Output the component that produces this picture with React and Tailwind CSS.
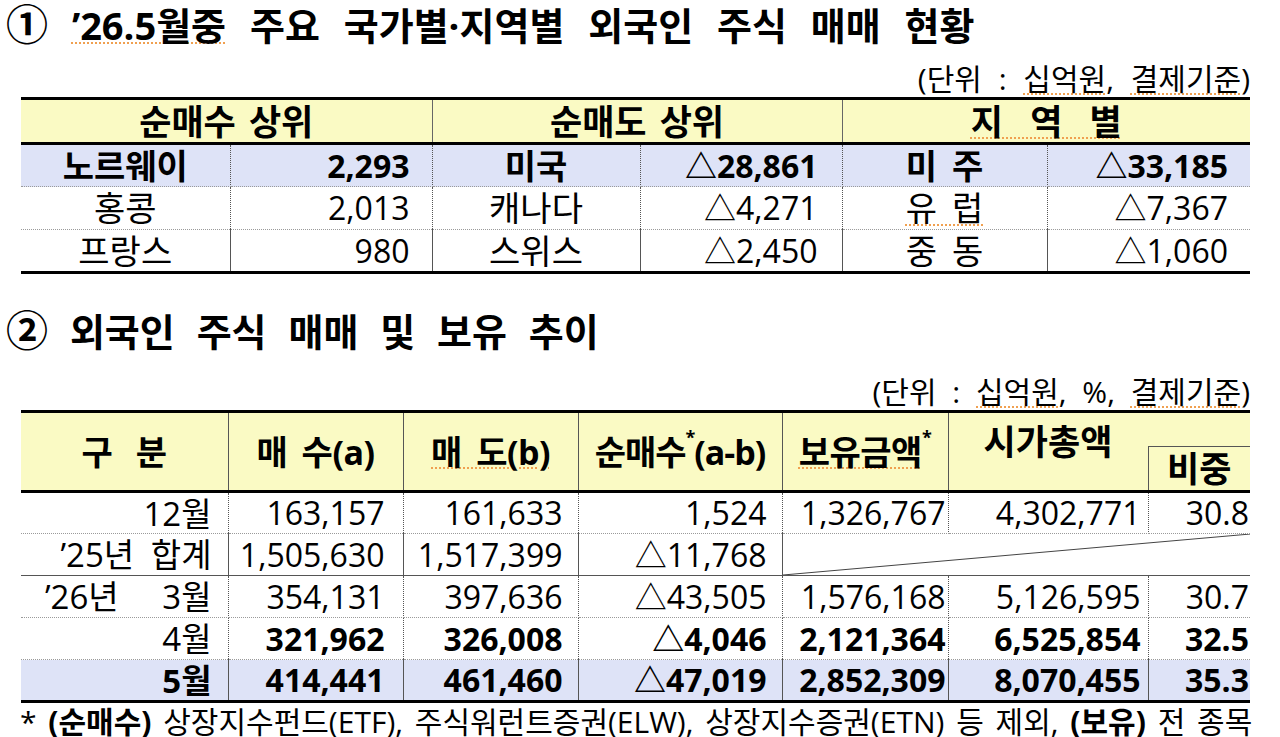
const YELLOW = 'bg-[#fafac4]';
const BLUE = 'bg-[#dee3f7]';

// spell-check style squiggle seen under some words in the source document
const Squiggle = ( { children } ) => (
	<span className="underline decoration-dotted decoration-[#f0a050] decoration-2 underline-offset-[3px]">{ children }</span>
);

const regionRows = [
	{ name: '노르웨이', buy: '2,293', sellName: '미국', sell: '△28,861', area: '미 주', areaVal: '△33,185', bold: true },
	{ name: '홍콩', buy: '2,013', sellName: '캐나다', sell: '△4,271', area: <Squiggle>유 럽</Squiggle>, areaVal: '△7,367' },
	{ name: '프랑스', buy: '980', sellName: '스위스', sell: '△2,450', area: '중 동', areaVal: '△1,060' },
];

const trendRows = [
	{ label: '12월', vals: [ '163,157', '161,633', '1,524', '1,326,767', '4,302,771', '30.8' ] },
	{ label: '’25년 합계', vals: [ '1,505,630', '1,517,399', '△11,768' ], merged: true },
	{ label: '’26년', label2: '3월', vals: [ '354,131', '397,636', '△43,505', '1,576,168', '5,126,595', '30.7' ] },
	{ label: '4월', vals: [ '321,962', '326,008', '△4,046', '2,121,364', '6,525,854', '32.5' ], boldVals: true },
	{ label: '5월', vals: [ '414,441', '461,460', '△47,019', '2,852,309', '8,070,455', '35.3' ], boldVals: true, boldLabel: true, blue: true },
];

// right padding per number column of the second table
const padRight = [ 'pr-[18px]', 'pr-[15px]', 'pr-[15px]', 'pr-[2px]', 'pr-[7px]', 'pr-[1px]' ];

const RegionTable = () => (
	<table className="ml-[21px] w-[1229px] table-fixed border-collapse">
		<colgroup>
			<col className="w-[209px]" />
			<col className="w-[202px]" />
			<col className="w-[208px]" />
			<col className="w-[202px]" />
			<col className="w-[205px]" />
			<col className="w-[203px]" />
		</colgroup>
		<thead>
			<tr className={ `h-[45px] ${ YELLOW }` }>
				<th colSpan={ 2 } className="border-t-[3px] border-b-[3px] border-t-black border-b-black border-r border-r-[#666] p-0 text-[35px] font-bold leading-none [word-spacing:4px]">순매수 상위</th>
				<th colSpan={ 2 } className="border-t-[3px] border-b-[3px] border-t-black border-b-black border-r border-r-[#666] p-0 text-[35px] font-bold leading-none [word-spacing:4px]">순매도 상위</th>
				<th colSpan={ 2 } className="border-t-[3px] border-b-[3px] border-t-black border-b-black p-0 text-[35px] font-bold leading-none [word-spacing:18px]"><Squiggle>지 역 별</Squiggle></th>
			</tr>
		</thead>
		<tbody>
			{ regionRows.map( ( row, i ) => {
				const last = i === regionRows.length - 1;
				const rowBorder = last ? 'border-b-[3px] border-b-black' : 'border-b border-dotted border-b-[#9a9a9a]';
				const weight = row.bold ? 'font-bold' : 'font-normal';
				return (
					<tr key={ i } className={ `h-[43px] ${ row.bold ? BLUE : 'bg-white' }` }>
						<td className={ `${ rowBorder } border-r border-r-[#555] p-0 text-center text-[34px] leading-none ${ weight }` }>{ row.name }</td>
						<td className={ `${ rowBorder } border-r border-r-[#555] p-0 pr-[22px] text-right text-[32px] leading-none ${ weight }` }>{ row.buy }</td>
						<td className={ `${ rowBorder } border-r border-r-[#555] p-0 text-center text-[34px] leading-none ${ weight }` }>{ row.sellName }</td>
						<td className={ `${ rowBorder } border-r border-r-[#555] p-0 pr-[24px] text-right text-[32px] leading-none ${ weight }` }>{ row.sell }</td>
						<td className={ `${ rowBorder } border-r border-r-[#555] p-0 text-center text-[34px] leading-none [word-spacing:6px] ${ weight }` }>{ row.area }</td>
						<td className={ `${ rowBorder } p-0 pr-[22px] text-right text-[32px] leading-none ${ weight }` }>{ row.areaVal }</td>
					</tr>
				);
			} ) }
		</tbody>
	</table>
);

const TrendTable = () => {
	const headTh = 'border-t-[3px] border-b-[3px] border-t-black border-b-black border-r border-r-[#555] p-0 text-[34px] font-bold leading-none';
	return (
		<table className="ml-[21px] w-[1229px] table-fixed border-collapse">
			<colgroup>
				<col className="w-[207px]" />
				<col className="w-[175px]" />
				<col className="w-[175px]" />
				<col className="w-[204px]" />
				<col className="w-[166px]" />
				<col className="w-[200px]" />
				<col className="w-[102px]" />
			</colgroup>
			<thead className={ YELLOW }>
				<tr className="h-[35px]">
					<th rowSpan={ 2 } className={ `${ headTh } [word-spacing:14px]` }>구 분</th>
					<th rowSpan={ 2 } className={ `${ headTh } [word-spacing:6px] tracking-[-0.5px]` }>매 수(a)</th>
					<th rowSpan={ 2 } className={ `${ headTh } [word-spacing:6px] tracking-[-0.5px]` }><Squiggle>매 도(b)</Squiggle></th>
					<th rowSpan={ 2 } className={ `${ headTh } tracking-[-1px]` }>순매수<sup className="text-[18px] align-[12px]">*</sup>(a-b)</th>
					<th rowSpan={ 2 } className={ `${ headTh } tracking-[-0.5px]` }><Squiggle>보유금액</Squiggle><sup className="text-[18px] align-[12px]">*</sup></th>
					<th rowSpan={ 2 } className="border-t-[3px] border-b-[3px] border-t-black border-b-black p-0 pt-[11px] align-top text-[35px] font-bold leading-[36px]">시가총액</th>
					<th className="border-t-[3px] border-t-black p-0" />
				</tr>
				<tr className="h-[45px]">
					<th className="border-l border-t border-l-[#555] border-t-[#555] border-b-[3px] border-b-black p-0 text-[35px] font-bold leading-none">비중</th>
				</tr>
			</thead>
			<tbody>
				{ trendRows.map( ( row, i ) => {
					const last = i === trendRows.length - 1;
					const rowBorder = last
						? 'border-b-[3px] border-b-black'
						: row.merged
						? 'border-b border-b-[#555]'
						: 'border-b border-dotted border-b-[#9a9a9a]';
					return (
						<tr key={ i } className={ `h-[42px] ${ row.blue ? BLUE : 'bg-white' }` }>
							<td className={ `${ rowBorder } border-r border-r-[#555] p-0 pr-[16px] text-right text-[33px] leading-none ${ row.boldLabel ? 'font-bold' : 'font-normal' }` }>
								{ row.label2 ? (
									<div className="flex justify-between pl-[24px]">
										<span>{ row.label }</span>
										<span>{ row.label2 }</span>
									</div>
								) : (
									<span className="[word-spacing:8px]">{ row.label }</span>
								) }
							</td>
							{ row.vals.map( ( v, j ) => (
								<td
									key={ j }
									className={ `${ rowBorder } ${ j < 5 ? 'border-r border-r-[#555]' : '' } p-0 ${ padRight[ j ] } text-right text-[32px] leading-none ${ row.boldVals ? 'font-bold' : 'font-normal' }` }
								>
									{ v }
								</td>
							) ) }
							{ row.merged && (
								<td colSpan={ 3 } className={ `${ rowBorder } relative p-0` }>
									<svg className="absolute inset-0 h-full w-full" viewBox="0 0 100 10" preserveAspectRatio="none">
										<line x1="0" y1="10" x2="100" y2="0" stroke="#444" strokeWidth="1" vectorEffect="non-scaling-stroke" />
									</svg>
								</td>
							) }
						</tr>
					);
				} ) }
			</tbody>
		</table>
	);
};

export default function App() {
	return (
		<div className="h-[737px] w-[1280px] overflow-hidden bg-white text-black font-['Open_Sans','Noto_Sans_CJK_KR',sans-serif]">
			<div className="flex h-[48px] items-center pl-[6px] text-[38px] font-bold leading-[48px] [word-spacing:14px]">
				<span><span className="text-[42px]">①</span> <Squiggle>’26.5월중</Squiggle> 주요 국가별·지역별 외국인 주식 매매 현황</span>
			</div>
			<div className="flex h-[49px] items-end justify-end pb-[1px] pr-[30px] text-[30px] leading-[34px] [word-spacing:9px]">
				<span>(단위 : <Squiggle>십억원</Squiggle>, <Squiggle>결제기준</Squiggle>)</span>
			</div>

			<RegionTable />

			<div className="flex h-[80px] items-end pl-[6px] text-[38px] font-bold leading-[46px] [word-spacing:12px]">
				<span><span className="text-[42px]">②</span> 외국인 주식 매매 및 보유 추이</span>
			</div>
			<div className="flex h-[56px] items-end justify-end pb-[1px] pr-[30px] text-[30px] leading-[34px] [word-spacing:8px]">
				<span>(단위 : <Squiggle>십억원</Squiggle>, %, <Squiggle>결제기준</Squiggle>)</span>
			</div>

			<TrendTable />

			<div className="flex h-[37px] items-center pl-[20px] text-[30px] leading-[34px] [word-spacing:4px]">
				<span>* <b>(순매수)</b> 상장지수펀드(ETF), 주식워런트증권(ELW), 상장지수증권(ETN) 등 제외, <b>(보유)</b> 전 종목</span>
			</div>
		</div>
	);
}
